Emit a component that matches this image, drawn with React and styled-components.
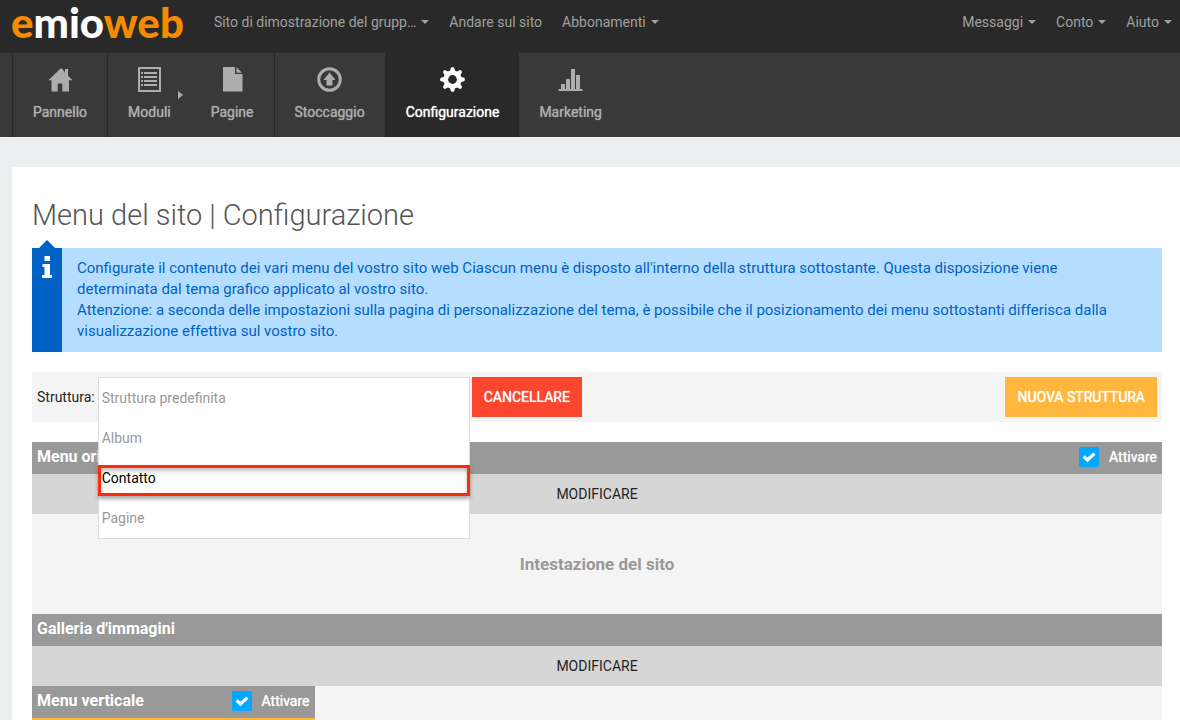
import React from 'react'
import styled, {createGlobalStyle, css} from 'styled-components'

const GlobalStyle = createGlobalStyle`
*, *::before, *::after { box-sizing: border-box; }
body {
margin: 0;
background: #ebeff0;
color: #1f1f1f;
font-family: Roboto, sans-serif;
font-size: 14px;
line-height: 20px;
}
button { font-family: inherit; cursor: pointer; }
`

const resetButton = css`
border: 0;
margin: 0;
padding: 0;
background: none;
font-size: 14px;
line-height: 20px;
`

const thick = css`
font-weight: 400;
text-shadow: 0 0 1px currentColor;
`

const TopBar = styled.header`
display: flex;
align-items: center;
height: 53px;
padding: 0 8px 10px 11px;
background: #292929;
`

const Logo = styled.a`
margin-right: 30px;
color: #f78b00;
font-family: Lato, sans-serif;
font-size: 42px;
font-weight: 900;
line-height: 52px;
text-decoration: none;
`

const LogoLight = styled.span`
color: #fff;
`

const TopNav = styled.nav`
display: flex;
gap: 20px;
margin-left: ${({$end}) => $end ? 'auto' : '0'};
`

const topItem = css`
color: #a0a0a0;
white-space: nowrap;
`

const TopLink = styled.a`
${topItem}
text-decoration: none;
`

const TopButton = styled.button`
${resetButton}
${topItem}
display: flex;
align-items: center;
gap: 5px;
`

const Caret = styled.span`
border: 4px solid transparent;
border-top-color: currentColor;
border-bottom: 0;
`

const MainNav = styled.nav`
display: flex;
height: 84px;
padding-left: 12px;
background: #3a3939;
`

const NavGroup = styled.div`
display: flex;
border-left: 1px solid #292929;
`

const NavItem = styled.a`
${thick}
position: relative;
display: flex;
flex-direction: column;
align-items: center;
gap: 9px;
padding: 13px 20px;
color: ${({$active}) => $active ? '#fff' : '#adadad'};
background: ${({$active}) => $active ? '#292929' : 'transparent'};
text-decoration: none;

svg {
width: 27px;
height: 27px;
fill: currentColor;
}
`

const SubArrow = styled.span`
position: absolute;
right: 8px;
top: 38px;
border: 4px solid transparent;
border-left: 5px solid #adadad;
border-right: 0;
`

const Page = styled.main`
margin: 30px 0 0 12px;
padding: 32px 18px 0 20px;
background: #fff;
`

const Title = styled.h1`
margin: 0;
color: #555;
font-size: 29px;
font-weight: 300;
line-height: 32px;
`

const Info = styled.section`
display: flex;
margin-top: 17px;
background: #b5ddff;
color: #0062c4;
font-size: 15px;
line-height: 21px;
`

const InfoMark = styled.div`
position: relative;
flex: none;
width: 30px;
padding-top: 8px;
background: #0062c4;
text-align: center;

&::before {
content: '';
position: absolute;
left: 7px;
top: -8px;
border: 8px solid transparent;
border-top: 0;
border-bottom-color: #0062c4;
}
`

const InfoText = styled.p`
margin: 0;
padding: 10px 30px 10px 15px;
`

const Toolbar = styled.div`
display: flex;
align-items: center;
height: 50px;
margin: 20px 0;
padding: 5px;
background: #f4f4f4;
`

const Picker = styled.div`
position: relative;
width: 372px;
height: 40px;
margin: 0 2px 0 3px;
`

const Options = styled.ul`
position: absolute;
z-index: 1;
top: 0;
left: 0;
width: 100%;
margin: 0;
padding: 0;
border: 1px solid #dcdcdc;
background: #fff;
list-style: none;
`

const Option = styled.li`
height: 40px;
color: ${({$selected}) => $selected ? '#000' : '#999'};
`

const OptionButton = styled.button`
${resetButton}
display: block;
width: 100%;
height: 40px;
padding: 0 3px;
color: inherit;
text-align: left;
`

const Highlight = styled.li`
position: absolute;
top: 87px;
left: -1px;
right: -1px;
height: 31px;
border: 3px solid #fd2b09;
box-shadow: 0 3px 4px rgba(0, 0, 0, .35), inset 0 3px 4px rgba(0, 0, 0, .25);
pointer-events: none;
`

const Action = styled.button`
${resetButton}
${thick}
height: 40px;
padding: 0 12px;
margin-left: ${({$end}) => $end ? 'auto' : '0'};
background: ${({$color}) => $color};
color: #fff;
`

const Block = styled.section`
width: ${({$narrow}) => $narrow ? '25%' : 'auto'};
`

const BlockHead = styled.div`
display: flex;
align-items: center;
justify-content: space-between;
height: 32px;
padding: 0 5px 2px;
background: #999;
color: #fff;
`

const BlockTitle = styled.h2`
margin: 0;
font-size: 16px;
font-weight: 700;
line-height: 20px;
`

const CheckLabel = styled.label`
${thick}
position: relative;
display: flex;
align-items: center;
gap: 10px;

svg {
position: absolute;
left: 3px;
width: 14px;
height: 14px;
fill: #fff;
pointer-events: none;
}
`

const Check = styled.input`
appearance: none;
width: 20px;
height: 20px;
margin: 0;
border-radius: 2px;
background: #999;

&:checked { background: #00a8ff; }
`

const Edit = styled.button`
${resetButton}
display: block;
width: 100%;
height: 40px;
background: #d6d6d6;
color: #1f1f1f;
`

const Placeholder = styled.div`
display: flex;
align-items: center;
justify-content: center;
height: 100px;
background: #f4f4f4;
color: #999;
font-size: 17px;
font-weight: 700;
`

const Columns = styled.div`
background: #f4f4f4;
`

const MenuBody = styled.div`
height: 40px;
background: #ffb83d;
`

const HomeIcon = () => (
    <svg viewBox="0 0 27 27" aria-hidden="true">
        <path d="M13.5 2.5 1.5 14.3H4.5V25.5h6.2v-8h4.6v8H22V14.3h3.5L21 9.7V3h-3v3.8L15 2.5z" />
    </svg>
)

const ListIcon = () => (
    <svg viewBox="0 0 27 27" aria-hidden="true">
        <path fillRule="evenodd" d="M2 1h23v25H2zM4 3v21h19V3z" />
        <path d="M5 6h2v2H5zM8 6h13v2H8zM5 10h2v2H5zM8 10h13v2H8zM5 14h2v2H5zM8 14h13v2H8zM5 18h2v2H5zM8 18h13v2H8z" />
    </svg>
)

const FileIcon = () => (
    <svg viewBox="0 0 27 27" aria-hidden="true">
        <path d="M4 1h12v7h7.5v17.5H4zM17.5 1.2l5.5 5.5h-5.5z" />
    </svg>
)

const UploadIcon = () => (
    <svg viewBox="0 0 27 27" aria-hidden="true">
        <path fillRule="evenodd" d="M13.5 1.2a12.3 12.3 0 1 1 0 24.6 12.3 12.3 0 0 1 0-24.6zm0 3a9.3 9.3 0 1 0 0 18.6 9.3 9.3 0 0 0 0-18.6z" />
        <path d="M13.5 6.5 19.5 14h-3v5.5h-6V14h-3z" />
    </svg>
)

const GearIcon = () => (
    <svg viewBox="0 0 27 27" aria-hidden="true">
        <circle cx="13.5" cy="13.5" r="6.8" fill="none" stroke="currentColor" strokeWidth="4.8" />
        {[0, 45, 90, 135, 180, 225, 270, 315].map((angle) => (
            <path key={angle} d="M10.8 5.5 11.8 2q.3-.8 1-.8h1.4q.7 0 1 .8l1 3.5z" transform={`rotate(${angle} 13.5 13.5)`} />
        ))}
    </svg>
)

const ChartIcon = () => (
    <svg viewBox="0 0 27 27" aria-hidden="true">
        <path d="M1.5 23h24v2h-24zM4 18h4v5.500H4zM9 13h4v10H9zM14 3h4v20h-4zM19 9h4v14h-4z" />
    </svg>
)

const InfoIcon = () => (
    <svg width="10" height="22" viewBox="0 0 10 22" aria-hidden="true">
        <path fill="#fff" d="M2.500 0h5.500v5h-5.500zM.5 8h7.500v11H10v3H0v-3h2.500v-8H.5z" />
    </svg>
)

const CheckIcon = () => (
    <svg viewBox="0 0 14 14" aria-hidden="true">
        <path d="M2.800 5.300.6 7.500l4.700 4.700 8.200-7.500-2.300-2.300-5.900 5.400z" />
    </svg>
)

const navGroups = [
    [{label: 'Pannello', Icon: HomeIcon}],
    [{label: 'Moduli', Icon: ListIcon, sub: true}, {label: 'Pagine', Icon: FileIcon}],
    [{label: 'Stoccaggio', Icon: UploadIcon}],
    [{label: 'Configurazione', Icon: GearIcon, active: true}, {label: 'Marketing', Icon: ChartIcon}],
]

const structures = ['Struttura predefinita', 'Album', 'Contatto', 'Pagine']

const Dropdown = ({children}) => (
    <TopButton type="button">{children}<Caret /></TopButton>
)

const Activate = () => (
    <CheckLabel>
        <Check type="checkbox" defaultChecked />
        <CheckIcon />
        Attivare
    </CheckLabel>
)

const App = () => (
    <>
        <GlobalStyle />
        <TopBar>
            <Logo href="#">e<LogoLight>mio</LogoLight>web</Logo>
            <TopNav>
                <Dropdown>Sito di dimostrazione del grupp…</Dropdown>
                <TopLink href="#">Andare sul sito</TopLink>
                <Dropdown>Abbonamenti</Dropdown>
            </TopNav>
            <TopNav $end>
                <Dropdown>Messaggi</Dropdown>
                <Dropdown>Conto</Dropdown>
                <Dropdown>Aiuto</Dropdown>
            </TopNav>
        </TopBar>
        <MainNav>
            {navGroups.map((items) => (
                <NavGroup key={items[0].label}>
                    {items.map(({label, Icon, sub, active}) => (
                        <NavItem key={label} href="#" $active={active}>
                            <Icon />
                            {label}
                            {sub && <SubArrow />}
                        </NavItem>
                    ))}
                </NavGroup>
            ))}
        </MainNav>
        <Page>
            <Title>Menu del sito | Configurazione</Title>
            <Info>
                <InfoMark><InfoIcon /></InfoMark>
                <InfoText>
                    Configurate il contenuto dei vari menu del vostro sito web Ciascun menu è disposto all'interno della struttura sottostante. Questa disposizione viene determinata dal tema grafico applicato al vostro sito.
                    <br />
                    Attenzione: a seconda delle impostazioni sulla pagina di personalizzazione del tema, è possibile che il posizionamento dei menu sottostanti differisca dalla visualizzazione effettiva sul vostro sito.
                </InfoText>
            </Info>
            <Toolbar>
                <span id="structure-label">Struttura:</span>
                <Picker>
                    <Options aria-labelledby="structure-label">
                        {structures.map((name) => (
                            <Option key={name} $selected={name === 'Contatto'}>
                                <OptionButton type="button">{name}</OptionButton>
                            </Option>
                        ))}
                        <Highlight aria-hidden="true" />
                    </Options>
                </Picker>
                <Action type="button" $color="#fc462d">CANCELLARE</Action>
                <Action type="button" $color="#ffb83d" $end>NUOVA STRUTTURA</Action>
            </Toolbar>
            <Block>
                <BlockHead>
                    <BlockTitle>Menu orizzontale</BlockTitle>
                    <Activate />
                </BlockHead>
                <Edit type="button">MODIFICARE</Edit>
                <Placeholder>Intestazione del sito</Placeholder>
            </Block>
            <Block>
                <BlockHead>
                    <BlockTitle>Galleria d'immagini</BlockTitle>
                </BlockHead>
                <Edit type="button">MODIFICARE</Edit>
            </Block>
            <Columns>
                <Block $narrow>
                    <BlockHead>
                        <BlockTitle>Menu verticale</BlockTitle>
                        <Activate />
                    </BlockHead>
                    <MenuBody />
                </Block>
            </Columns>
        </Page>
    </>
)

export default App
